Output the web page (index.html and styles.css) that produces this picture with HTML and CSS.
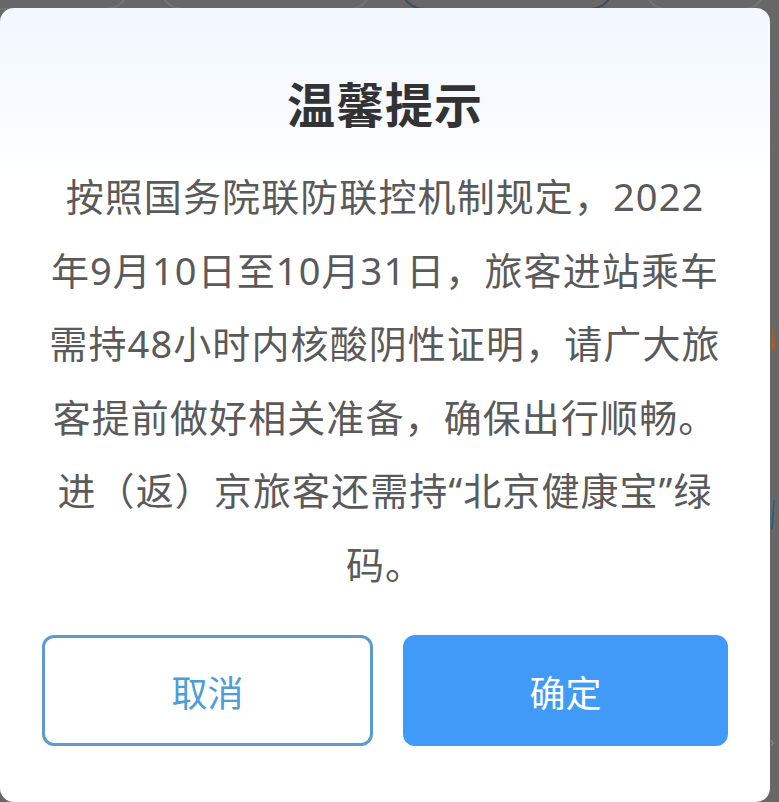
FILE: index.html
```html
<!DOCTYPE html>
<html lang="zh-CN">
<head>
<meta charset="utf-8">
<title>温馨提示</title>
<link rel="stylesheet" href="styles.css">
</head>
<body>
<div class="backdrop">
  <div class="bg-pill p1"></div>
  <div class="bg-pill p2"></div>
  <div class="bg-pill p3"></div>
  <div class="bg-pill p4"></div>
  <div class="bg-mark orange"></div>
  <div class="bg-mark blue"></div>
  <div class="bg-arrow">›</div>
</div>
<div class="dialog">
  <h1 class="title">温馨提示</h1>
  <p class="message">按照国务院联防联控机制规定，2022<br>年9月10日至10月31日，旅客进站乘车<br>需持48小时内核酸阴性证明，请广大旅<br>客提前做好相关准备，确保出行顺畅。<br>进（返）京旅客还需持“北京健康宝”绿<br>码。</p>
  <div class="actions">
    <button class="btn btn-cancel">取消</button>
    <button class="btn btn-ok">确定</button>
  </div>
</div>
</body>
</html>
```

FILE: styles.css
```css
html, body {
  margin: 0;
  padding: 0;
}
body {
  width: 779px;
  height: 802px;
  overflow: hidden;
  background: #676767;
  position: relative;
  font-family: "Noto Sans", "Noto Sans CJK SC", sans-serif;
}
.backdrop {
  position: absolute;
  inset: 0;
  z-index: 0;
  overflow: hidden;
}
.bg-pill {
  position: absolute;
  top: -40px;
  height: 46px;
  border-radius: 24px;
  border: 2px solid #747474;
}
.p1 { left: -60px; width: 186px; }
.p2 { left: 159px; width: 210px; }
.p3 { left: 400px; width: 210px; border-color: #3d4f5f; }
.p4 { left: 643px; width: 120px; }
.bg-mark {
  position: absolute;
  left: 771px;
  width: 4px;
}
.orange { top: 325px; height: 24px; background: #a5601f; clip-path: polygon(40% 0, 60% 0, 100% 100%, 0 100%); }
.blue { top: 500px; height: 30px; background: #2d5a86; clip-path: polygon(60% 0, 100% 0, 40% 100%, 0 100%); }
.bg-arrow {
  position: absolute;
  left: 770px;
  top: 732px;
  color: #8a8a8a;
  font-size: 14px;
}
.dialog {
  position: relative;
  z-index: 1;
  margin-top: 8px;
  width: 770px;
  height: 794px;
  box-sizing: border-box;
  border-radius: 14px;
  background: linear-gradient(180deg, #f2f8fe 0px, #f6faff 90px, #ffffff 170px);
  padding: 67px 42px 0;
  display: flex;
  flex-direction: column;
  align-items: center;
}
.title {
  margin: 0;
  font-size: 48px;
  line-height: 60px;
  font-weight: 700;
  color: #333333;
  letter-spacing: 1px;
}
.message {
  margin: 25px 0 0;
  font-size: 38px;
  line-height: 73.5px;
  letter-spacing: 1.1px;
  color: #5a5a5a;
  text-align: center;
  white-space: nowrap;
}
.actions {
  margin-top: 34px;
  width: 100%;
  display: flex;
  gap: 30px;
}
.btn {
  flex: 1 1 0;
  height: 111px;
  border-radius: 12px;
  font-family: "Noto Sans CJK SC", sans-serif;
  font-size: 36px;
  box-sizing: border-box;
  cursor: pointer;
}
.btn-cancel {
  background: #ffffff;
  border: 3px solid #5b9bd1;
  color: #4c9dd8;
}
.btn-ok {
  background: #3f9bf7;
  border: none;
  color: #ffffff;
}
```
